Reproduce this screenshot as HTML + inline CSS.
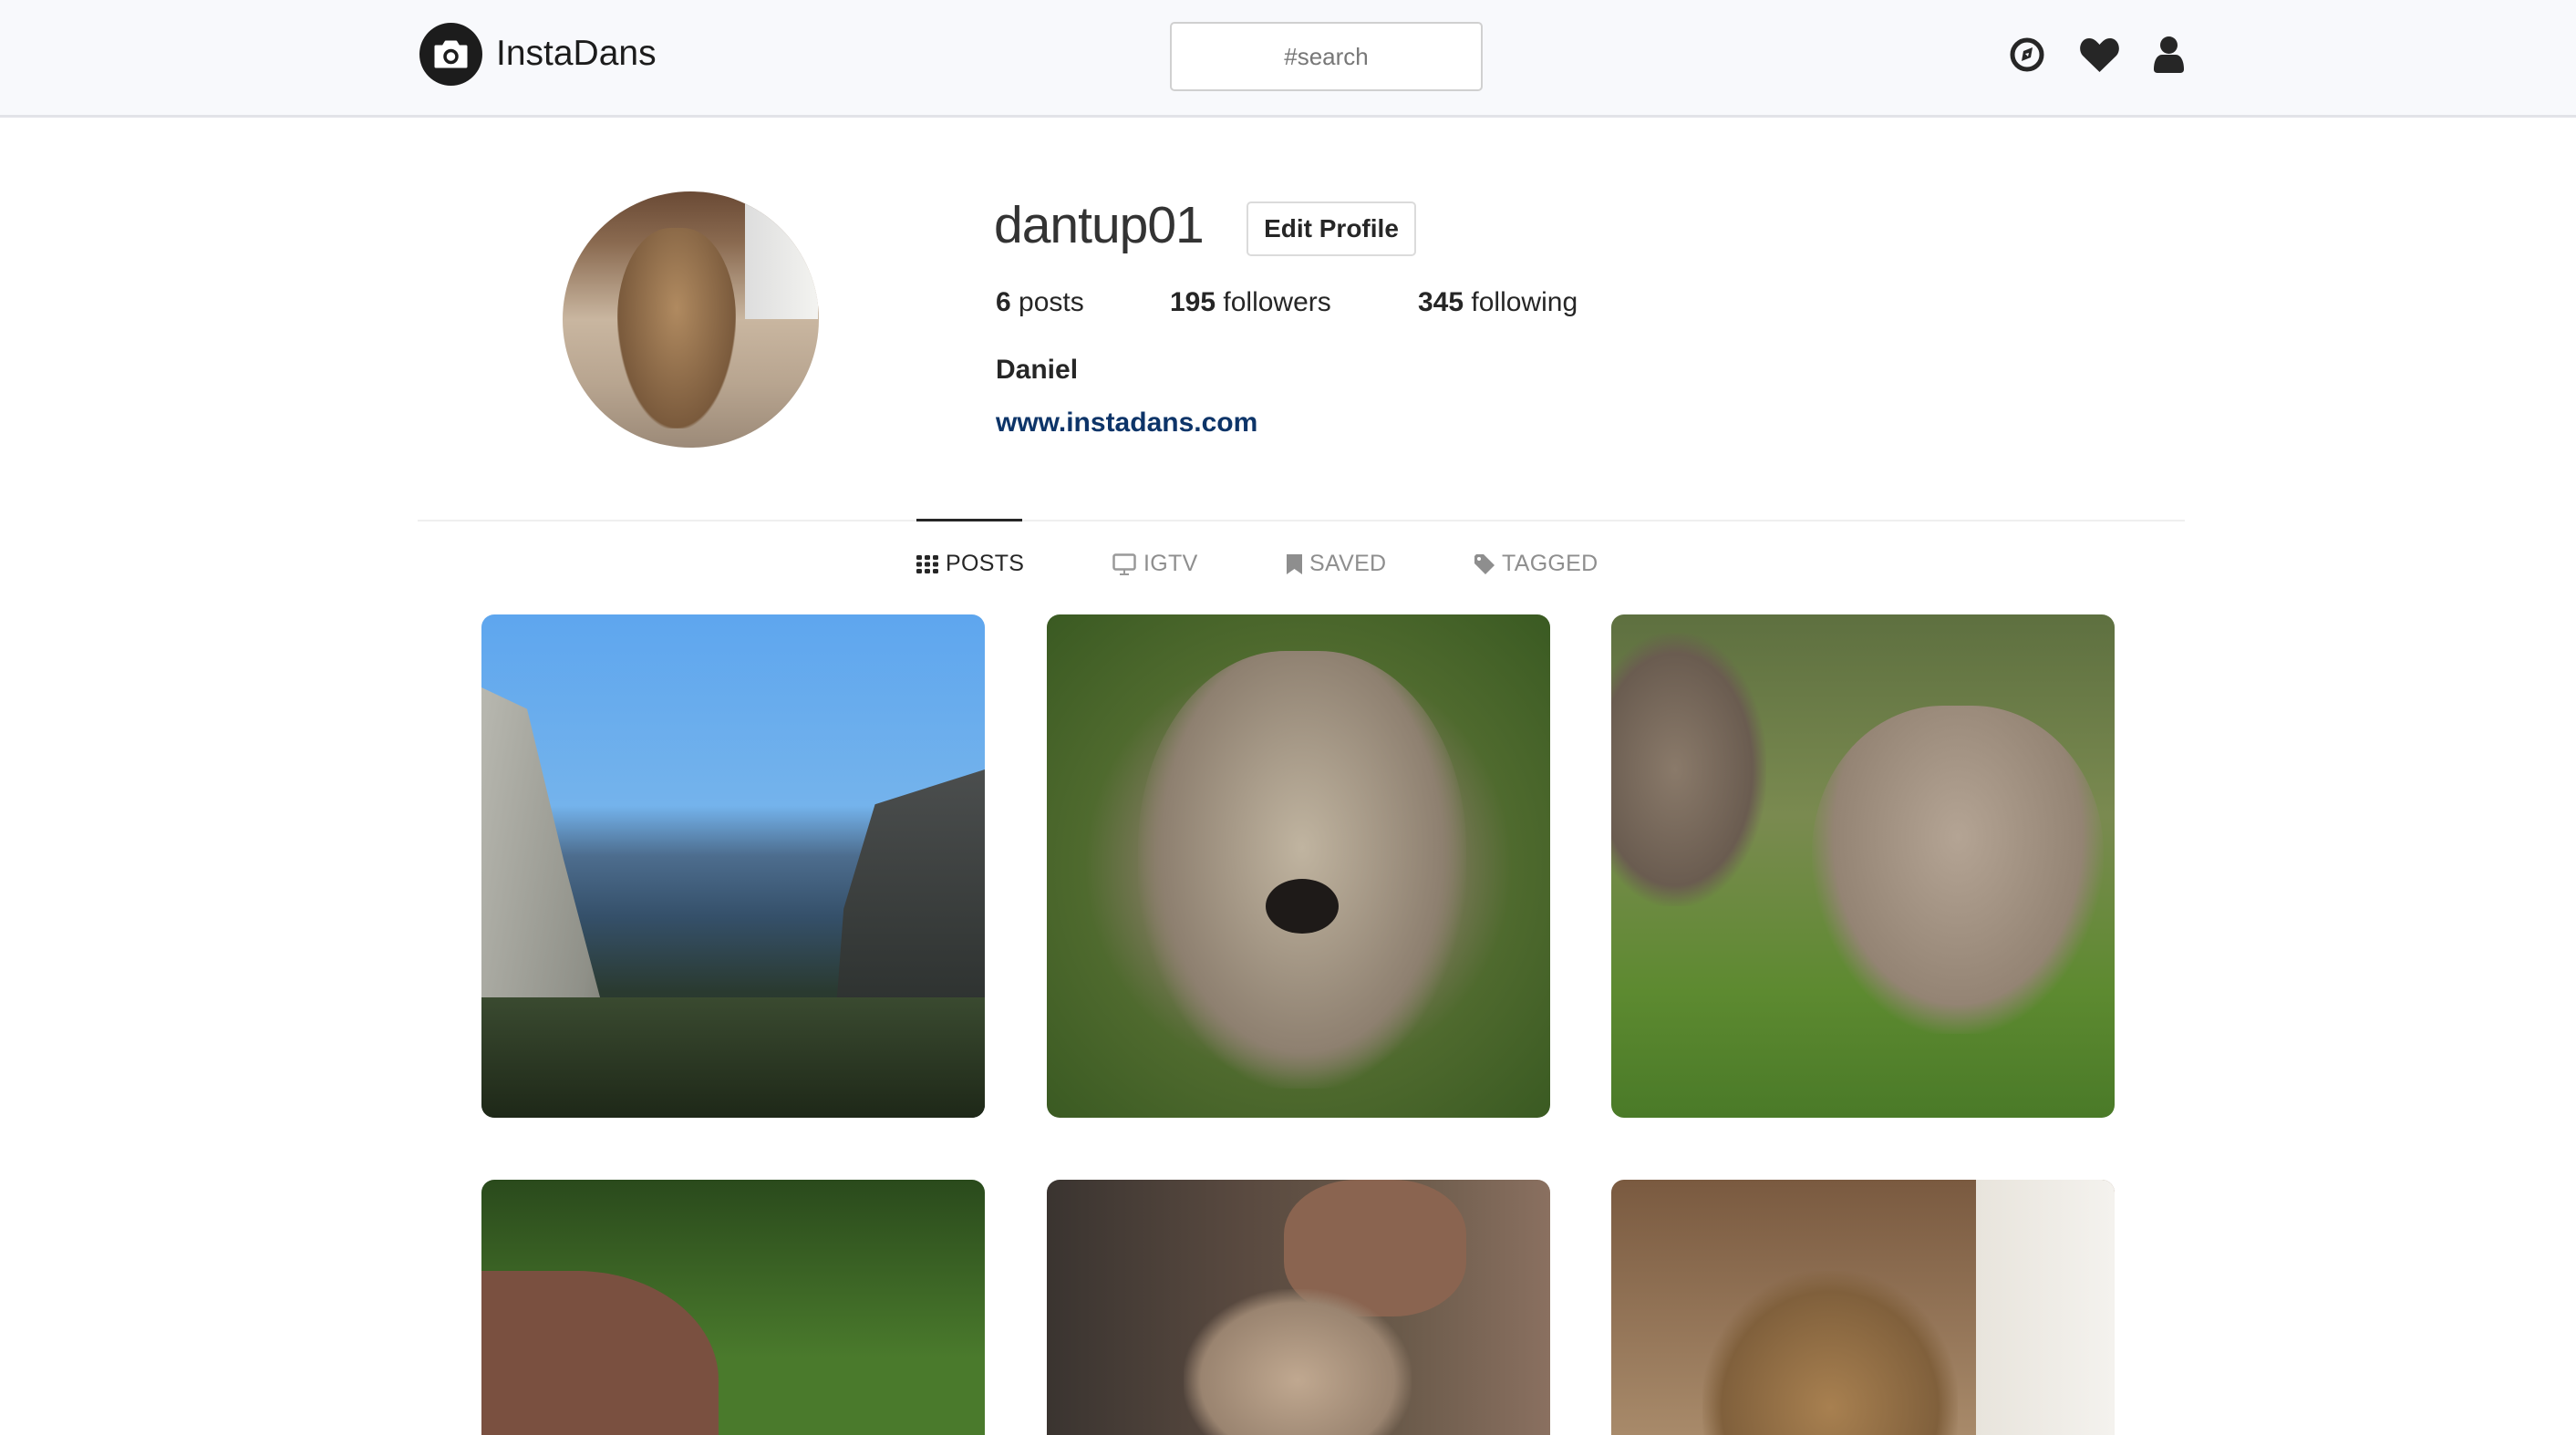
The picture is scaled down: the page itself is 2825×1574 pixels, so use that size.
<!DOCTYPE html>
<html><head><meta charset="utf-8"><style>
*{margin:0;padding:0;box-sizing:border-box}
html,body{width:2825px;height:1574px;overflow:hidden}
body{background:#fff;font-family:"Liberation Sans",sans-serif;color:#262626}
#wrap{position:relative;width:2825px;height:1574px;overflow:hidden}
.hdr{position:absolute;left:0;top:0;width:2825px;height:129px;background:#f8f9fc;border-bottom:3px solid #e2e3e8}
.abs{position:absolute}
.img{position:absolute;width:552px;height:552px;border-radius:14px;overflow:hidden}
.r2{height:280px;border-radius:14px 14px 0 0}
.tab{position:absolute;top:604px;font-size:25px;color:#8e8e8e;display:flex;align-items:center;gap:8px;letter-spacing:.3px}
</style></head><body><div id="wrap">
<div class="hdr">
  <svg class="abs" style="left:460px;top:25px" width="69" height="69" viewBox="0 0 69 69">
    <circle cx="34.5" cy="34.5" r="34.5" fill="#1c1c1c"/>
    <path d="M18 26h8l3-5h11l3 5h8v22H18z" fill="#fff" stroke="#fff" stroke-width="3" stroke-linejoin="round"/>
    <circle cx="34.5" cy="37" r="6.5" fill="none" stroke="#1c1c1c" stroke-width="3.5"/>
  </svg>
  <div class="abs" style="left:544px;top:37px;font-size:39px;color:#1c1c1c">InstaDans</div>
  <div class="abs" style="left:1283px;top:24px;width:343px;height:76px;background:#fff;border:2px solid #d0d0d0;border-radius:5px;font-size:26px;color:#777;text-align:center;line-height:72px">#search</div>
  <svg class="abs" style="left:2203px;top:40px" width="40" height="40" viewBox="0 0 40 40">
    <circle cx="20" cy="20" r="16" fill="none" stroke="#262626" stroke-width="5"/>
    <path d="M14 27l2-11 10-4-2 11z" fill="#262626"/><path d="M18 19l4-1-1 4z" fill="#f8f9fc"/>
  </svg>
  <svg class="abs" style="left:2280px;top:40px" width="45" height="40" viewBox="0 0 45 40">
    <path d="M22.5 39L4 21C-2 14 2 2 11 2c5 0 8 3 11.5 7C26 5 29 2 34 2c9 0 13 12 7 19z" fill="#262626"/>
  </svg>
  <svg class="abs" style="left:2362px;top:40px" width="33" height="40" viewBox="0 0 33 40">
    <circle cx="16.5" cy="9.5" r="9.5" fill="#262626"/><path d="M0 36c0-10 4-16 9-16h15c5 0 9 6 9 16 0 2-1 4-4 4H4c-3 0-4-2-4-4z" fill="#262626"/>
  </svg>
</div>

<div class="abs" style="left:617px;top:210px;width:281px;height:281px;border-radius:50%;overflow:hidden;background:linear-gradient(180deg,#6a4a35 0%,#8a6a50 20%,#c9b6a0 50%,#b8a590 75%,#9c8a78 100%)">
  <div class="abs" style="left:60px;top:40px;width:130px;height:220px;border-radius:45%;background:radial-gradient(ellipse at 50% 40%,#b08a60,#7a5a3c 70%,transparent 72%)"></div>
  <div class="abs" style="left:200px;top:0;width:80px;height:140px;background:linear-gradient(90deg,#ddd,#f3f3f0)"></div>
</div>

<div class="abs" style="left:1090px;top:214px;font-size:57px;color:#333;letter-spacing:-1px">dantup01</div>
<div class="abs" style="left:1367px;top:221px;width:186px;height:60px;border:2px solid #dbdbdb;border-radius:5px;font-size:28px;font-weight:bold;line-height:56px;text-align:center;color:#262626">Edit Profile</div>
<div class="abs" style="left:1092px;top:315px;font-size:30px"><b>6</b> posts</div>
<div class="abs" style="left:1283px;top:315px;font-size:30px"><b>195</b> followers</div>
<div class="abs" style="left:1555px;top:315px;font-size:30px"><b>345</b> following</div>
<div class="abs" style="left:1092px;top:389px;font-size:30px;font-weight:bold">Daniel</div>
<div class="abs" style="left:1092px;top:447px;font-size:30px;font-weight:bold;color:#0d3468">www.instadans.com</div>

<div class="abs" style="left:458px;top:570px;width:1938px;height:2px;background:#efefef"></div>
<div class="abs" style="left:1005px;top:569px;width:116px;height:3px;background:#262626"></div>
<div class="tab" style="left:1005px;color:#262626">
  <svg width="24" height="20" viewBox="0 0 24 20"><g fill="#262626"><rect x="0" y="0" width="6" height="5" rx="1.5"/><rect x="9" y="0" width="6" height="5" rx="1.5"/><rect x="18" y="0" width="6" height="5" rx="1.5"/><rect x="0" y="7.5" width="6" height="5" rx="1.5"/><rect x="9" y="7.5" width="6" height="5" rx="1.5"/><rect x="18" y="7.5" width="6" height="5" rx="1.5"/><rect x="0" y="15" width="6" height="5" rx="1.5"/><rect x="9" y="15" width="6" height="5" rx="1.5"/><rect x="18" y="15" width="6" height="5" rx="1.5"/></g></svg>POSTS</div>
<div class="tab" style="left:1220px">
  <svg width="26" height="24" viewBox="0 0 26 24"><rect x="1.5" y="1.5" width="23" height="16" rx="2" fill="none" stroke="#999" stroke-width="2.5"/><path d="M13 18v4M8 23h10" stroke="#999" stroke-width="2"/></svg>IGTV</div>
<div class="tab" style="left:1411px">
  <svg width="17" height="22" viewBox="0 0 17 22"><path d="M0 0h17v22l-8.5-6L0 22z" fill="#8e8e8e"/></svg>SAVED</div>
<div class="tab" style="left:1617px">
  <svg width="22" height="22" viewBox="0 0 22 22"><path d="M0 2v8l12 12 10-10L10 0H2z" fill="#8e8e8e"/><circle cx="5" cy="5" r="2" fill="#fff"/></svg>TAGGED</div>

<div class="img" style="left:528px;top:674px;background:linear-gradient(180deg,#5ea6ee 0%,#74b3ec 38%,#4d6d8e 48%,#35506a 60%,#2a3a30 75%,#1e2a22 100%)">
  <div class="abs" style="left:0;top:80px;width:200px;height:472px;background:linear-gradient(100deg,#b8b8b0,#8f9088 60%,#5a5a50);clip-path:polygon(0 0,25% 5%,45% 40%,70% 80%,100% 100%,0 100%)"></div>
  <div class="abs" style="left:380px;top:170px;width:172px;height:382px;background:linear-gradient(180deg,#4b4e4e,#202522);clip-path:polygon(30% 10%,100% 0,100% 100%,0 100%,10% 40%)"></div>
  <div class="abs" style="left:0;top:420px;width:552px;height:132px;background:linear-gradient(180deg,#3a4a30,#1e2818)"></div>
</div>
<div class="img" style="left:1148px;top:674px;background:radial-gradient(ellipse at 50% 50%,#a09480 0%,#8a7c68 35%,#4f6a2e 60%,#3a5a22 100%)">
  <div class="abs" style="left:100px;top:40px;width:360px;height:480px;border-radius:45%;background:radial-gradient(ellipse at 50% 45%,#c0b4a0,#8e8070 60%,transparent 72%)"></div>
  <div class="abs" style="left:240px;top:290px;width:80px;height:60px;border-radius:50%;background:#1e1a18"></div>
</div>
<div class="img" style="left:1767px;top:674px;background:linear-gradient(180deg,#5e7040 0%,#7a8a50 40%,#5d8a30 75%,#4a7a28 100%)">
  <div class="abs" style="left:-30px;top:20px;width:200px;height:300px;border-radius:45%;background:radial-gradient(ellipse,#8a7a6a,#6a5c50 60%,transparent 72%)"></div>
  <div class="abs" style="left:220px;top:100px;width:320px;height:360px;border-radius:45%;background:radial-gradient(ellipse at 50% 40%,#b4a494,#948474 60%,transparent 72%)"></div>
</div>
<div class="img r2" style="left:528px;top:1294px;background:linear-gradient(180deg,#2a4a1c,#4a7a2c 70%)">
  <div class="abs" style="left:0;top:100px;width:260px;height:200px;background:#7a5040;border-radius:0 60% 0 0"></div>
</div>
<div class="img r2" style="left:1148px;top:1294px;background:linear-gradient(90deg,#3a3430,#5a4a40 40%,#6a5a4a 70%,#8a7060)">
  <div class="abs" style="left:260px;top:0;width:200px;height:150px;border-radius:40%;background:#8a6450"></div>
  <div class="abs" style="left:150px;top:120px;width:250px;height:200px;border-radius:45%;background:radial-gradient(ellipse,#c0a890,#9a8470 60%,transparent 72%)"></div>
</div>
<div class="img r2" style="left:1767px;top:1294px;background:linear-gradient(180deg,#7a5a40,#a88a6a 100%)">
  <div class="abs" style="left:400px;top:0;width:152px;height:280px;background:linear-gradient(90deg,#e8e4dc,#f4f2ee)"></div>
  <div class="abs" style="left:100px;top:100px;width:280px;height:300px;border-radius:45%;background:radial-gradient(ellipse,#a88050,#80603c 60%,transparent 72%)"></div>
</div>
</div></body></html>
